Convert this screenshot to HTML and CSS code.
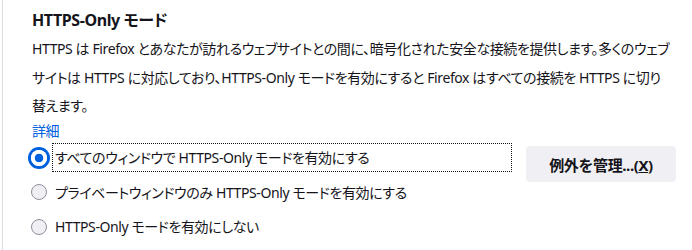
FILE: index.html
```html
<!DOCTYPE html>
<html lang="ja">
<head>
    <meta charset="UTF-8">
    <title>HTTPS-Only モード</title>
    <link rel="stylesheet" href="styles.css">
</head>
<body>
    <div class="pane">
        <h1 class="pane-title">HTTPS-Only モード</h1>
        <p class="pane-desc">HTTPS は Firefox とあなたが訪れるウェブサイトとの間に、暗号化された安全な接続を提供します。多くのウェブサイトは HTTPS に対応しており、HTTPS-Only モードを有効にすると Firefox はすべての接続を HTTPS に切り替えます。</p>
        <a class="learn-more" href="#">詳細</a>

        <div class="mode-box">
            <div class="radio-group">
                <label class="radio-row">
                    <input type="radio" name="https-mode" class="radio focused" checked>
                    <span class="radio-label focused">すべてのウィンドウで HTTPS-Only モードを有効にする</span>
                </label>
                <label class="radio-row">
                    <input type="radio" name="https-mode" class="radio">
                    <span class="radio-label">プライベートウィンドウのみ HTTPS-Only モードを有効にする</span>
                </label>
                <label class="radio-row">
                    <input type="radio" name="https-mode" class="radio">
                    <span class="radio-label">HTTPS-Only モードを有効にしない</span>
                </label>
            </div>
            <button class="btn">例外を管理...(<u>X</u>)</button>
        </div>
    </div>
</body>
</html>
```

FILE: styles.css
```css
body {
    margin: 0;
    background-color: #ffffff;
    color: #15141a;
    font-family: "Noto Sans", "Noto Sans CJK JP", sans-serif;
    font-feature-settings: "palt";
    font-size: 14px;
    letter-spacing: -0.4px;
}
.pane {
    margin-left: 2px;
    border-left: 1px solid #dcdce0;
    padding: 8px 16px 0 29px;
    height: 242px;
}
.pane-title {
    margin: 0;
    font-size: 16px;
    font-weight: bold;
    line-height: 24px;
}
.pane-desc {
    margin: 3px 4px 0 0;
    line-height: 28.5px;
}
.learn-more {
    display: block;
    color: #0061e0;
    text-decoration: none;
    line-height: 20px;
}
.mode-box {
    display: flex;
    align-items: flex-start;
    margin-top: 0;
}
.radio-group {
    flex: 1;
}
.radio-row {
    display: flex;
    align-items: center;
    height: 34.5px;
}
.radio {
    appearance: none;
    width: 16px;
    height: 16px;
    margin: 0 5px 0 -1px;
    border: 1px solid #8f8f9d;
    border-radius: 50%;
    background-color: #f0f0f4;
    flex-shrink: 0;
}
.radio:checked {
    border: none;
    background: radial-gradient(circle, #0061e0 0 4px, #ffffff 4.6px);
}
.radio.focused {
    box-shadow: 0 0 0 3px #0061e0;
}
.radio-label {
    flex: 1;
    padding: 0 2px;
    line-height: 27px;
    border: 1px dotted transparent;
}
.radio-label.focused {
    border-color: #15141a;
}
.btn {
    margin: 5.5px 0 0 14px;
    width: 150px;
    height: 36px;
    border: none;
    border-radius: 4px;
    background-color: #f0f0f4;
    color: #15141a;
    font-family: inherit;
    font-size: 15px;
    font-weight: bold;
    letter-spacing: -0.4px;
}
```
